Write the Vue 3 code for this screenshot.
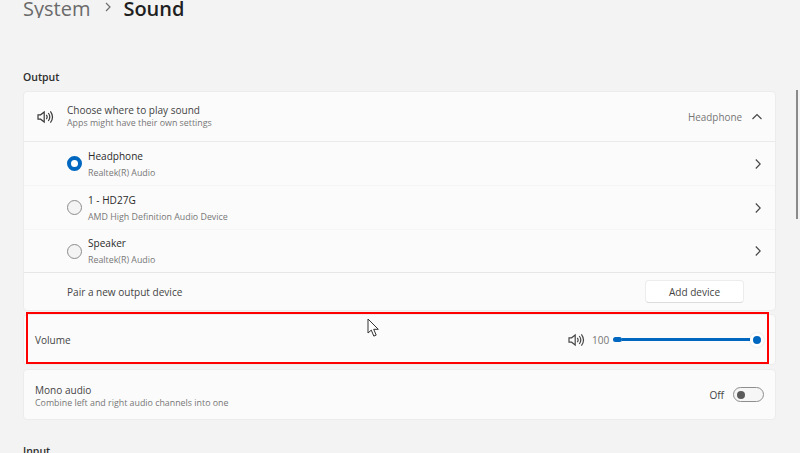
<script setup>
const devices = [
  { name: 'Headphone', sub: 'Realtek(R) Audio', selected: true },
  { name: '1 - HD27G', sub: 'AMD High Definition Audio Device', selected: false },
  { name: 'Speaker', sub: 'Realtek(R) Audio', selected: false },
]
</script>

<template>
  <div class="page">
    <header class="crumbs">
      <span class="crumb-parent">System</span>
      <svg class="crumb-sep" width="8" height="10" viewBox="0 0 8 10"><path d="M2 1 6 5 2 9" fill="none" stroke="#6e6e6e" stroke-width="1.2" /></svg>
      <span class="crumb-current">Sound</span>
    </header>

    <h2 class="section">Output</h2>

    <section class="card">
      <div class="row row-head">
        <svg class="speaker" width="17" height="14" viewBox="0 0 17 14">
          <path d="M1 4.8h2.6L7.2 2v10L3.6 9.2H1z M9.3 4.8c1 1.3 1 3.1 0 4.4 M11.3 3c1.8 2.4 1.8 5.6 0 8 M13.4 1.3c2.6 3.5 2.6 7.9 0 11.4" fill="none" stroke="#3a3a3a" stroke-width="1.2" />
        </svg>
        <div class="text head-text">
          <div class="title">Choose where to play sound</div>
          <div class="sub">Apps might have their own settings</div>
        </div>
        <span class="value">Headphone</span>
        <svg class="chev-up" width="12" height="8" viewBox="0 0 12 8"><path d="M1.5 6 6 1.6 10.5 6" fill="none" stroke="#444" stroke-width="1.1" /></svg>
      </div>

      <div v-for="d in devices" :key="d.name" class="row row-device">
        <span class="radio" :class="{ on: d.selected }"></span>
        <div class="text">
          <div class="title dark">{{ d.name }}</div>
          <div class="sub device-sub">{{ d.sub }}</div>
        </div>
        <svg class="chev-right" width="8" height="12" viewBox="0 0 8 12"><path d="M1.8 1.5 6.2 6 1.8 10.5" fill="none" stroke="#444" stroke-width="1.1" /></svg>
      </div>

      <div class="row row-pair">
        <span class="title">Pair a new output device</span>
        <button class="add">Add device</button>
      </div>
    </section>

    <section class="card card-single volume">
      <span class="title volume-label">Volume</span>
      <svg class="speaker small" width="17" height="14" viewBox="0 0 17 14">
        <path d="M1 4.8h2.6L7.2 2v10L3.6 9.2H1z M9.3 4.8c1 1.3 1 3.1 0 4.4 M11.3 3c1.8 2.4 1.8 5.6 0 8 M13.4 1.3c2.6 3.5 2.6 7.9 0 11.4" fill="none" stroke="#484848" stroke-width="1.2" />
      </svg>
      <span class="vol-num">100</span>
      <div class="slider">
        <span class="slider-start"></span>
        <span class="slider-track"></span>
        <span class="slider-thumb"></span>
      </div>
      <div class="red-box"></div>
      <svg class="cursor" width="14" height="21" viewBox="0 0 14 21">
        <path d="M1 1v14l3.3-2.9 2.5 6 2.4-1-2.5-5.8h4.6z" fill="#fff" stroke="#333" stroke-width="1" />
      </svg>
    </section>

    <section class="card card-single mono">
      <div class="text mono-text">
        <div class="title">Mono audio</div>
        <div class="sub">Combine left and right audio channels into one</div>
      </div>
      <span class="off">Off</span>
      <span class="toggle"><span class="knob"></span></span>
    </section>

    <h2 class="section input">Input</h2>

    <div class="scrollbar"></div>
  </div>
</template>

<style scoped>
.page {
  position: relative;
  width: 800px;
  height: 453px;
  overflow: hidden;
  background: #f3f3f3;
  padding: 0 24px 0 23px;
  box-sizing: border-box;
  font-family: "Open Sans", "Noto Sans", sans-serif;
  color: #3b3b3b;
}
.crumbs {
  height: 18px;
  display: flex;
  align-items: flex-end;
  line-height: 18px;
  font-size: 20px;
  overflow: hidden;
}
.crumb-parent { color: #6a6a6a; }
.crumb-current { color: #1f1f1f; font-weight: 600; margin-left: 11px; }
.crumb-sep { align-self: flex-start; margin: 2px 0 0 14px; }
.section {
  margin: 52px 0 7px;
  font-size: 10.5px;
  font-weight: 600;
  line-height: 14px;
  color: #2e2e2e;
}
.card {
  background: #fbfbfb;
  border: 1px solid #ececec;
  border-radius: 4px;
  box-sizing: border-box;
}
.row {
  display: flex;
  align-items: center;
  border-bottom: 1px solid #eaeaea;
  box-sizing: border-box;
}
.row-head { height: 50px; padding: 0 12px 0 13px; }
.head-text { margin-top: -2px; }
.row-device { height: 44px; padding: 0 13px 0 43px; border-bottom-color: #f5f5f5; }
.row-device:nth-child(4) { border-bottom-color: #e6e6e6; height: 43px; }
.row-pair { height: 37px; padding: 0 31px 0 43px; border-bottom: 0; justify-content: space-between; }
.speaker { flex: none; margin-right: 13px; }
.text { min-width: 0; flex: 1; }
.title { font-size: 10.05px; line-height: 14px; color: #444; }
.title.dark { color: #2b2b2b; }
.sub { font-size: 8.85px; line-height: 12px; color: #777; }
.device-sub { margin-top: 4px; }
.mono-text { margin-top: 2px; }
.value { font-size: 9.9px; color: #767676; margin-right: 9px; }
.chev-up { flex: none; }
.chev-right { flex: none; }
.radio {
  flex: none;
  width: 15px;
  height: 15px;
  margin-right: 6px;
  border: 1px solid #8c8c8c;
  border-radius: 50%;
  box-sizing: border-box;
  background: #f4f4f4;
}
.radio.on { border: 4px solid #0067c0; background: #fff; }
.add {
  width: 99px;
  height: 23px;
  padding: 0;
  background: #fff;
  border: 1px solid #ececec;
  border-bottom-color: #dcdcdc;
  border-radius: 4px;
  font: inherit;
  font-size: 10.05px;
  color: #444;
}
.card-single {
  display: flex;
  align-items: center;
  position: relative;
  height: 51px;
  padding: 0 11px;
}
.volume { margin-top: 3px; }
.volume-label { flex: 1; }
.speaker.small { margin-right: 7px; }
.vol-num { font-size: 10.05px; color: #767676; width: 21px; }
.slider { position: relative; display: flex; align-items: center; width: 151px; height: 16px; }
.slider-start { width: 9px; height: 5px; border-radius: 3px; background: #0067c0; flex: none; }
.slider-track { flex: 1; height: 3px; background: #0067c0; margin-right: 14px; }
.slider-thumb {
  position: absolute;
  right: 0;
  top: 1px;
  width: 8px;
  height: 8px;
  border: 3px solid #fff;
  border-radius: 50%;
  background: #0067c0;
  box-shadow: 0 0 2px rgba(0, 0, 0, 0.15);
}
.red-box {
  position: absolute;
  left: 2px;
  right: 6px;
  top: -3px;
  bottom: 0;
  border: 2px solid #f00;
  pointer-events: none;
}
.cursor { position: absolute; left: 343px; top: 3px; }
.mono { margin-top: 4px; }
.off { font-size: 10.05px; color: #444; margin-right: 9px; }
.toggle {
  display: flex;
  align-items: center;
  width: 31px;
  height: 15px;
  padding-left: 3px;
  box-sizing: border-box;
  border: 1px solid #8e8e8e;
  border-radius: 8px;
  background: #f6f6f6;
}
.knob { width: 8px; height: 8px; border-radius: 50%; background: #5a5a5a; }
.section.input { margin-top: 24px; }
.scrollbar { position: absolute; right: 2px; top: 90px; width: 2px; height: 129px; background: #8a8a8a; }
</style>
